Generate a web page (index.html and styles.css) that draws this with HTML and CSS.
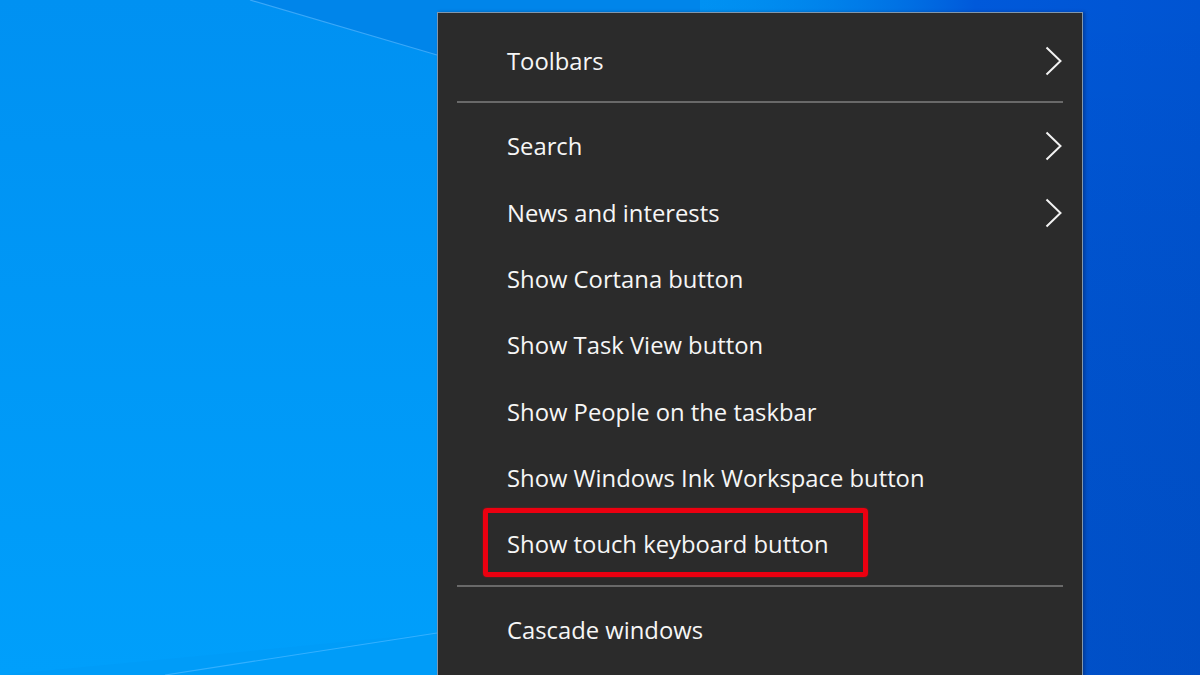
FILE: index.html
```html
<!DOCTYPE html>
<html lang="en">
<head>
<meta charset="utf-8">
<title>Taskbar context menu</title>
<link rel="stylesheet" href="styles.css">
</head>
<body>
<div class="desktop">
  <svg class="wallpaper" width="1200" height="675" viewBox="0 0 1200 675" aria-hidden="true">
    <defs>
      <linearGradient id="wl" x1="0" y1="0" x2="0" y2="1">
        <stop offset="0" stop-color="#0091f2"/>
        <stop offset="1" stop-color="#009ffb"/>
      </linearGradient>
      <linearGradient id="wr" x1="0" y1="0" x2="1" y2="0">
        <stop offset="0" stop-color="#0085ea" stop-opacity="0"/>
        <stop offset="0.55" stop-color="#0059da"/>
        <stop offset="1" stop-color="#0054d2"/>
      </linearGradient>
      <linearGradient id="wd" x1="0" y1="0" x2="0" y2="1">
        <stop offset="0" stop-color="#000000" stop-opacity="0"/>
        <stop offset="1" stop-color="#002060" stop-opacity="0.12"/>
      </linearGradient>
    </defs>
    <rect x="0" y="0" width="1200" height="675" fill="url(#wl)"/>
    <polygon points="250,0 700,0 700,130 437,55" fill="#0085ea"/>
    <polygon points="0,675 437,633 700,600 700,675" fill="#009cf8"/>
    <rect x="700" y="0" width="500" height="675" fill="url(#wr)"/>
    <rect x="1083" y="0" width="117" height="675" fill="url(#wd)"/>
    <line x1="250" y1="0" x2="437" y2="55" stroke="#3aa8f8" stroke-width="1.2"/>
    <line x1="165" y1="675" x2="437" y2="633" stroke="#33b0ff" stroke-width="1.2"/>
  </svg>

  <div class="menu">
    <div class="item"><span class="label">Toolbars</span><svg class="chev" width="17" height="30" viewBox="0 0 17 30"><polyline points="1.5,1.5 15.5,15 1.5,28.5"/></svg></div>
    <div class="sep"></div>
    <div class="item"><span class="label">Search</span><svg class="chev" width="17" height="30" viewBox="0 0 17 30"><polyline points="1.5,1.5 15.5,15 1.5,28.5"/></svg></div>
    <div class="item"><span class="label">News and interests</span><svg class="chev" width="17" height="30" viewBox="0 0 17 30"><polyline points="1.5,1.5 15.5,15 1.5,28.5"/></svg></div>
    <div class="item"><span class="label">Show Cortana button</span></div>
    <div class="item"><span class="label">Show Task View button</span></div>
    <div class="item"><span class="label">Show People on the taskbar</span></div>
    <div class="item"><span class="label">Show Windows Ink Workspace button</span></div>
    <div class="item"><span class="label">Show touch keyboard button</span><span class="mark"></span></div>
    <div class="sep"></div>
    <div class="item"><span class="label">Cascade windows</span></div>
  </div>
</div>
</body>
</html>
```

FILE: styles.css
```css
html, body {
  margin: 0;
  padding: 0;
}
body {
  width: 1200px;
  height: 675px;
  overflow: hidden;
  font-family: "Open Sans", "Noto Sans", sans-serif;
}
.desktop {
  position: relative;
  width: 1200px;
  height: 675px;
  overflow: hidden;
  background: #0092f2;
}
.wallpaper {
  position: absolute;
  left: 0;
  top: 0;
  display: block;
}
.menu {
  position: absolute;
  left: 437px;
  top: 12px;
  width: 646px;
  height: 700px;
  background: #2b2b2b;
  border: 1px solid #8197ad;
  box-shadow: 2px 0 3px rgba(0, 20, 60, 0.35);
  padding-top: 15px;
  box-sizing: border-box;
  display: flex;
  flex-direction: column;
}
.item {
  position: relative;
  height: 66.33px;
  flex: none;
  display: flex;
  align-items: center;
  justify-content: space-between;
  padding: 0 20px 0 69px;
  color: #f6f6f6;
  font-size: 23.8px;
}
.label {
  white-space: nowrap;
}
.chev {
  display: block;
}
.chev polyline {
  fill: none;
  stroke: #f2f2f2;
  stroke-width: 2;
}
.sep {
  flex: none;
  height: 2px;
  margin: 7px 19px 10px 19px;
  background: #696969;
}
.mark {
  position: absolute;
  left: 45px;
  top: -3px;
  width: 385px;
  height: 69px;
  box-sizing: border-box;
  border: 5px solid #ec0010;
  border-radius: 4px;
  box-shadow: 0 0 2px rgba(255, 0, 0, 0.5);
}
```
